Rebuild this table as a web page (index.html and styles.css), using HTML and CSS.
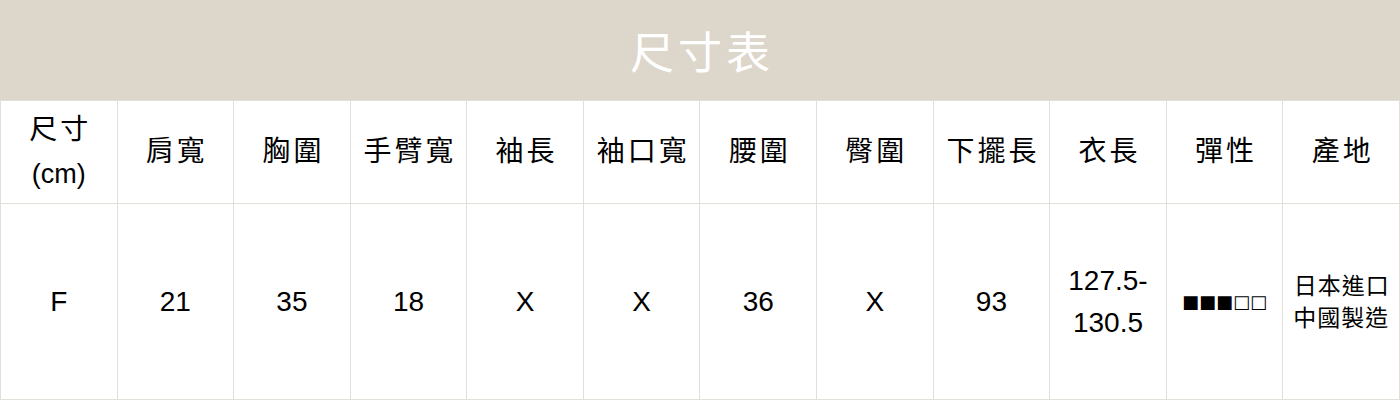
FILE: index.html
```html
<!DOCTYPE html>
<html lang="zh-Hant">
<head>
<meta charset="utf-8">
<title>尺寸表</title>
<link rel="stylesheet" href="styles.css">
</head>
<body>
<div class="chart">
  <div class="banner">尺寸表</div>
  <table class="sizes">
    <thead>
      <tr>
        <th>尺寸<br><span class="unit">(cm)</span></th>
        <th>肩寬</th>
        <th>胸圍</th>
        <th>手臂寬</th>
        <th>袖長</th>
        <th>袖口寬</th>
        <th>腰圍</th>
        <th>臀圍</th>
        <th>下擺長</th>
        <th>衣長</th>
        <th>彈性</th>
        <th>產地</th>
      </tr>
    </thead>
    <tbody>
      <tr>
        <td>F</td>
        <td>21</td>
        <td>35</td>
        <td>18</td>
        <td>X</td>
        <td>X</td>
        <td>36</td>
        <td>X</td>
        <td>93</td>
        <td class="two">127.5-<br>130.5</td>
        <td class="stretch">■■■□□</td>
        <td class="origin">日本進口<br>中國製造</td>
      </tr>
    </tbody>
  </table>
</div>
</body>
</html>
```
FILE: styles.css
```css
html, body {
  margin: 0;
  padding: 0;
  background: #ffffff;
}

.chart {
  width: 1400px;
  font-family: "Liberation Sans", "Noto Sans CJK TC", sans-serif;
  color: #111111;
}

.banner {
  height: 100px;
  background: #ddd6cb;
  color: #ffffff;
  font-family: "Noto Sans CJK TC", sans-serif;
  font-size: 44px;
  letter-spacing: 4px;
  text-indent: 4px;
  display: flex;
  align-items: center;
  justify-content: center;
}

.sizes {
  width: 1400px;
  table-layout: fixed;
  border-collapse: collapse;
}

.sizes th,
.sizes td {
  border: 1px solid #e2dfd8;
  text-align: center;
  vertical-align: middle;
  padding: 0;
}

.sizes th {
  height: 102px;
  font-weight: normal;
  font-size: 28px;
  letter-spacing: 3px;
  text-indent: 3px;
  line-height: 44px;
  color: #000000;
}

.sizes th .unit {
  font-size: 27px;
  letter-spacing: 0;
}

.sizes td {
  height: 195px;
  font-size: 28px;
  line-height: 42px;
  color: #000000;
}

.sizes td.stretch {
  font-family: "DejaVu Sans", sans-serif;
  font-size: 18px;
  letter-spacing: 0;
}

.sizes td.origin {
  font-size: 23px;
  letter-spacing: 1px;
  text-indent: 1px;
  line-height: 32px;
}
```
